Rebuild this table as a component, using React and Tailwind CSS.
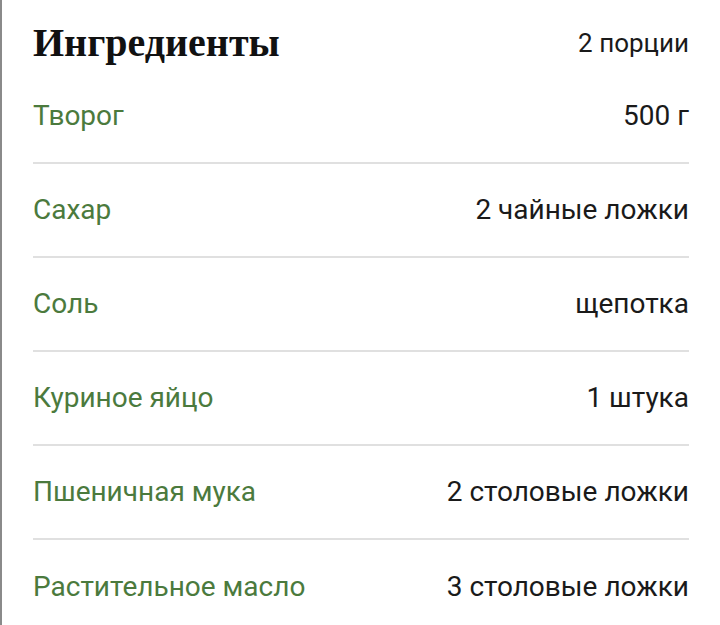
import React from 'react';

const ingredients = [
  { name: 'Творог', amount: '500 г' },
  { name: 'Сахар', amount: '2 чайные ложки' },
  { name: 'Соль', amount: 'щепотка' },
  { name: 'Куриное яйцо', amount: '1 штука' },
  { name: 'Пшеничная мука', amount: '2 столовые ложки' },
  { name: 'Растительное масло', amount: '3 столовые ложки' },
];

export default function App() {
  return (
    <div className="h-[625px] w-[720px] overflow-hidden bg-white border-l-2 border-[#8a8a8a]">
      <div className="pl-[31px] pr-[31px]" style={{ fontFamily: 'Roboto, sans-serif' }}>
        {/* Header */}
        <div className="flex h-[70px] items-center justify-between pt-[16px]">
          <h2
            className="text-[40px] font-bold leading-none text-[#111]"
            style={{ fontFamily: '"Liberation Serif", "DejaVu Serif", serif' }}
          >
            Ингредиенты
          </h2>
          <span className="text-[26px] text-[#1a1a1a]">2 порции</span>
        </div>

        {/* Ingredient list */}
        {ingredients.map((item, idx) => (
          <div
            key={item.name}
            className={`flex h-[94px] items-center justify-between ${
              idx < ingredients.length - 1 ? 'border-b-2 border-[#e0e0e0]' : ''
            }`}
          >
            <span className="text-[28px] text-[#4b7a3d]">{item.name}</span>
            <span className="text-[28px] text-[#1a1a1a]">{item.amount}</span>
          </div>
        ))}
      </div>
    </div>
  );
}
